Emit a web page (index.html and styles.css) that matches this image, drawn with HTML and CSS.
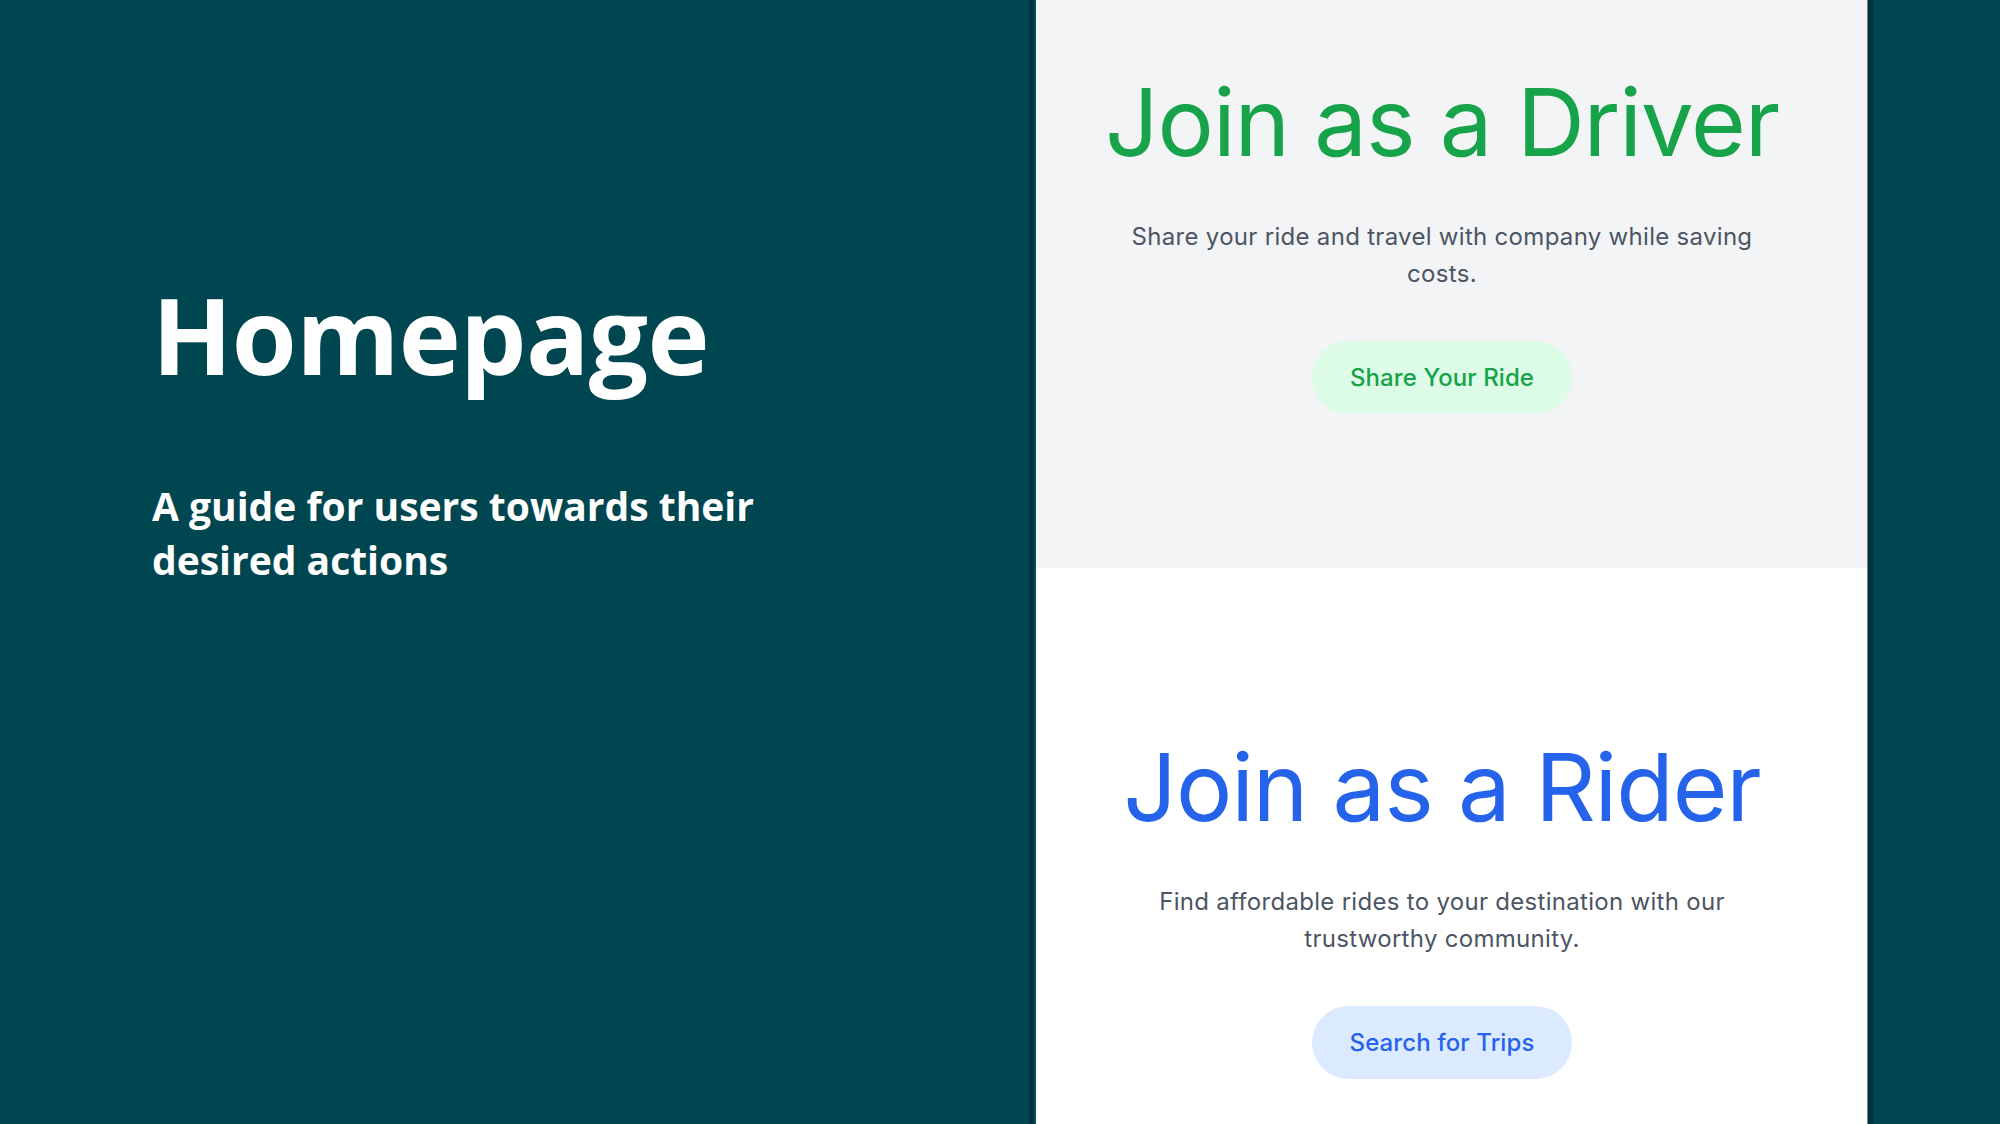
FILE: index.html
```html
<!DOCTYPE html>
<html lang="en">
<head>
<meta charset="utf-8">
<title>Homepage</title>
<link rel="stylesheet" href="styles.css">
</head>
<body>
<div class="page">
  <section class="intro">
    <h1 class="intro-title">Homepage</h1>
    <p class="intro-sub">A guide for users towards their desired actions</p>
  </section>
  <div class="phone">
    <div class="screen">
      <section class="block block-driver">
        <h2 class="block-title title-green">Join as a Driver</h2>
        <p class="block-text">Share your ride and travel with company while saving costs.</p>
        <a class="btn btn-green" href="#">Share Your Ride</a>
      </section>
      <section class="block block-rider">
        <h2 class="block-title title-blue">Join as a Rider</h2>
        <p class="block-text">Find affordable rides to your destination with our trustworthy community.</p>
        <a class="btn btn-blue" href="#">Search for Trips</a>
      </section>
    </div>
  </div>
</div>
</body>
</html>
```
FILE: styles.css
```css
* { box-sizing: border-box; }
html, body { margin: 0; padding: 0; }
body {
  width: 2000px;
  height: 1124px;
  overflow: hidden;
  background: #004650;
  font-family: "Open Sans", "Liberation Sans", sans-serif;
}
.page {
  display: flex;
  height: 1124px;
  background: #004650;
}
.intro {
  width: 1029px;
  flex: none;
  padding: 272px 0 0 152px;
  color: #ffffff;
}
.intro-title {
  margin: 0;
  font-family: "Open Sans", sans-serif;
  font-weight: 700;
  font-size: 105px;
  line-height: 126px;
  letter-spacing: -0.6px;
}
.intro-sub {
  margin: 81px 0 0 0;
  max-width: 650px;
  font-family: "Open Sans", sans-serif;
  font-weight: 700;
  font-size: 39px;
  line-height: 54px;
}
.phone {
  width: 844px;
  flex: none;
  display: flex;
  height: 1124px;
  border-left: 5px solid #00323a;
  border-right: 5px solid #00323a;
  padding-left: 2px;
  background: #00505a;
}
.screen {
  width: 832px;
  height: 1124px;
  border-right: 1px solid #6f8488;
  display: flex;
  flex-direction: column;
  font-family: Inter, "Noto Sans", sans-serif;
  background: #ffffff;
}
.block {
  display: flex;
  flex-direction: column;
  align-items: center;
  text-align: center;
  padding-right: 19px;
}
.block-driver {
  background: #f3f4f6;
  height: 568px;
  padding-top: 75px;
}
.block-rider {
  background: #ffffff;
  flex: 1;
  padding-top: 172px;
}
.block-title {
  margin: 0;
  font-weight: 400;
  font-size: 94px;
  line-height: 94px;
  letter-spacing: -1.1px;
  white-space: nowrap;
}
.title-green { color: #16a34a; }
.title-blue { color: #2563eb; }
.block-text {
  margin: 49px 0 0 0;
  width: 660px;
  font-size: 24px;
  line-height: 37px;
  letter-spacing: 0.3px;
  color: #4b5563;
}
.btn {
  margin-top: 49px;
  display: inline-block;
  padding: 22px 38px;
  border-radius: 37px;
  font-size: 24px;
  line-height: 29px;
  font-weight: 500;
  letter-spacing: 0.1px;
  text-decoration: none;
}
.btn-green { background: #dcfce7; color: #16a34a; }
.btn-blue { background: #dbeafe; color: #2563eb; }
```
